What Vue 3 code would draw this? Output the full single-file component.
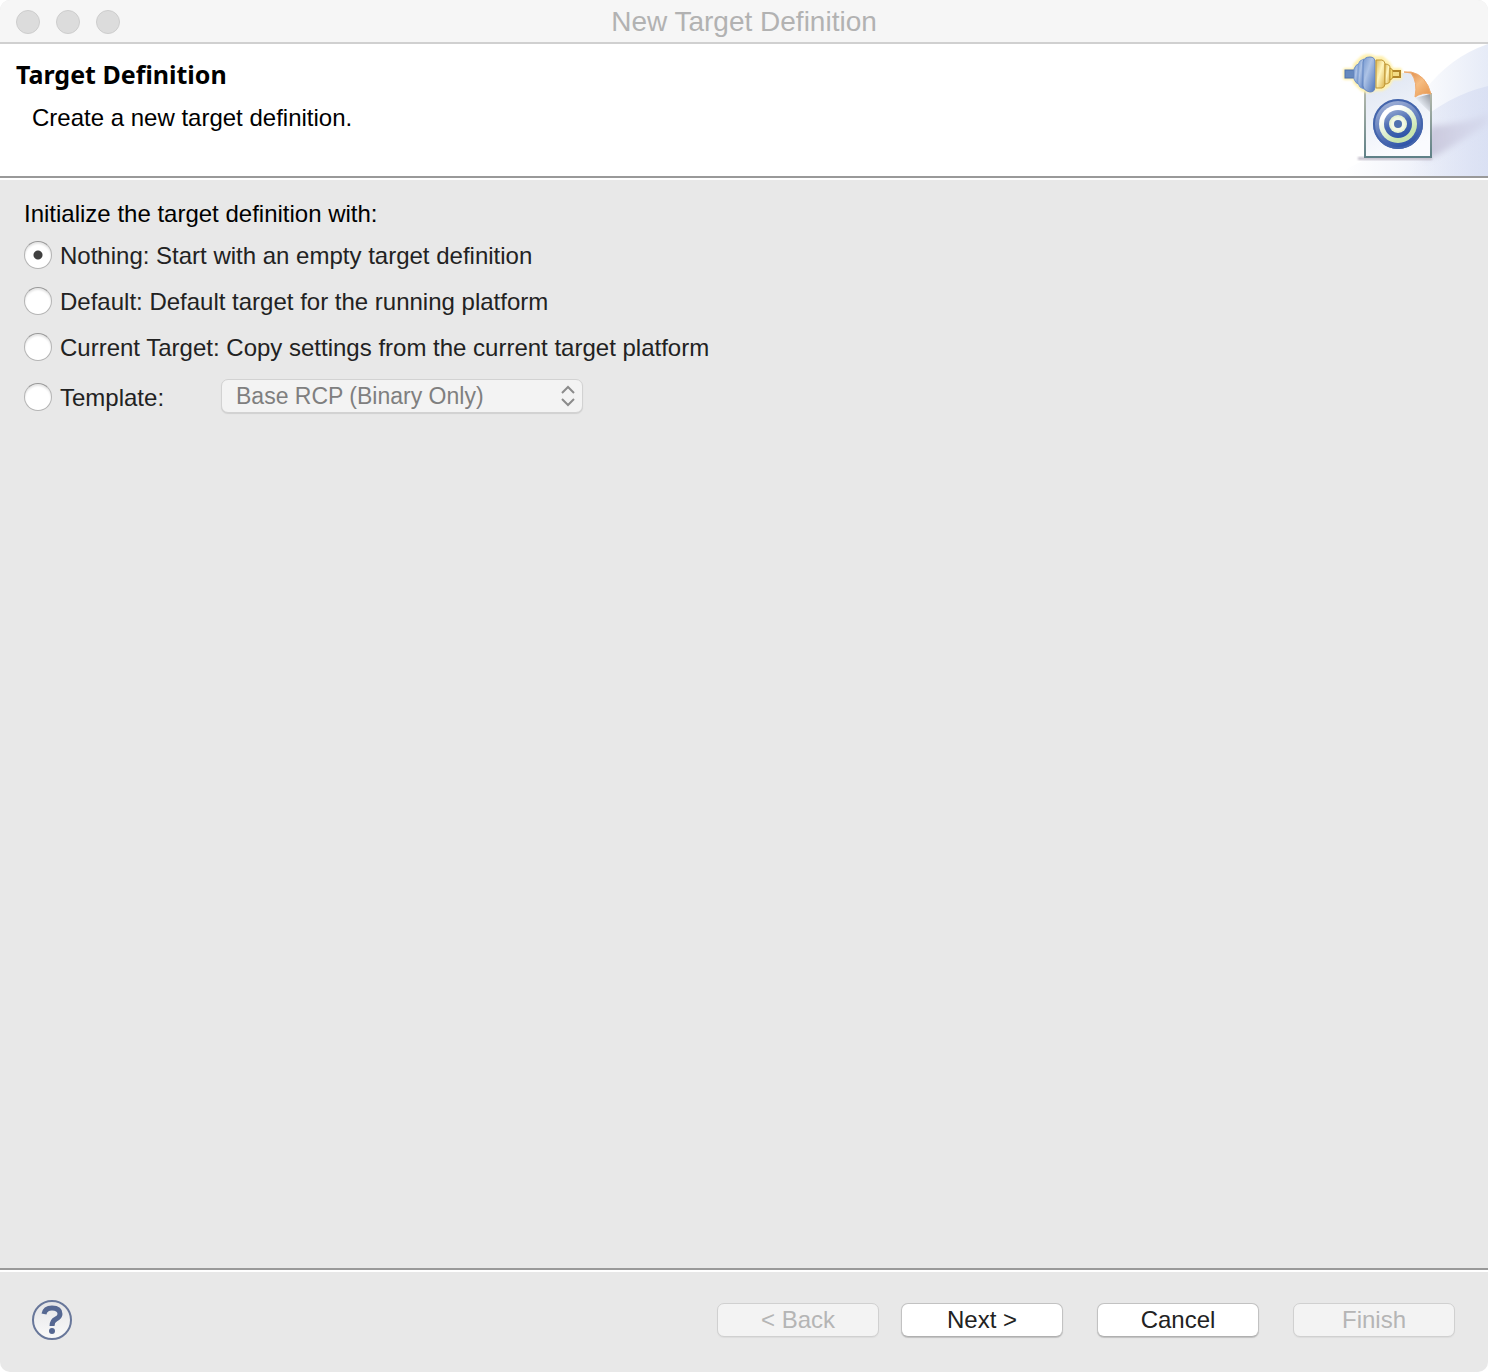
<script setup>
import { ref } from 'vue'

const choice = ref('nothing')
const template = ref('Base RCP (Binary Only)')
const options = [
  { id: 'nothing', label: 'Nothing: Start with an empty target definition' },
  { id: 'default', label: 'Default: Default target for the running platform' },
  { id: 'current', label: 'Current Target: Copy settings from the current target platform' },
]
</script>

<template>
  <div class="window">
    <div class="titlebar">
      <div class="lights"><span></span><span></span><span></span></div>
      <div class="caption">New Target Definition</div>
    </div>

    <header class="banner">
      <div class="banner-text">
        <h1>Target Definition</h1>
        <p>Create a new target definition.</p>
      </div>
      <svg class="banner-art" viewBox="0 0 160 132" width="160" height="132" aria-hidden="true">
        <defs>
          <linearGradient id="sky" x1="0" x2="1" y1="0" y2="0">
            <stop offset="0.2" stop-color="#fff" />
            <stop offset="1" stop-color="#e6ebf7" />
          </linearGradient>
          <linearGradient id="sky2" x1="0" x2="1" y1="0" y2="0">
            <stop offset="0.1" stop-color="#d5dcf2" stop-opacity="0" />
            <stop offset="1" stop-color="#d5dcf2" stop-opacity="0.7" />
          </linearGradient>
          <linearGradient id="shade" x1="0" x2="1" y1="0" y2="0">
            <stop offset="0" stop-color="#bcb8d0" stop-opacity="0.8" />
            <stop offset="1" stop-color="#cbcbe1" stop-opacity="0.3" />
          </linearGradient>
          <linearGradient id="paper" x1="0" x2="0.3" y1="0" y2="1">
            <stop offset="0" stop-color="#dde4f1" />
            <stop offset="1" stop-color="#fafbfe" />
          </linearGradient>
          <linearGradient id="edge" x1="0" x2="0" y1="0" y2="1">
            <stop offset="0" stop-color="#b9bcae" />
            <stop offset="1" stop-color="#5f8087" />
          </linearGradient>
          <linearGradient id="fold" x1="0" x2="1" y1="0" y2="1">
            <stop offset="0" stop-color="#d9813f" />
            <stop offset="0.5" stop-color="#f6bd82" />
            <stop offset="1" stop-color="#e4924a" />
          </linearGradient>
          <linearGradient id="curl" x1="0" x2="1" y1="1" y2="0">
            <stop offset="0.4" stop-color="#e6ebf3" />
            <stop offset="1" stop-color="#93979f" />
          </linearGradient>
          <linearGradient id="blue" x1="0" x2="1" y1="0" y2="1">
            <stop offset="0" stop-color="#7497cf" />
            <stop offset="0.4" stop-color="#adc3e6" />
            <stop offset="1" stop-color="#4f76ba" />
          </linearGradient>
          <linearGradient id="gold" x1="0" x2="1" y1="0" y2="1">
            <stop offset="0" stop-color="#e0bb55" />
            <stop offset="0.45" stop-color="#fff5bd" />
            <stop offset="1" stop-color="#d9ae45" />
          </linearGradient>
          <linearGradient id="rim" x1="0.2" x2="0.6" y1="0" y2="1">
            <stop offset="0" stop-color="#a9b8da" />
            <stop offset="0.45" stop-color="#6d87c2" />
            <stop offset="1" stop-color="#2b51a6" />
          </linearGradient>
          <linearGradient id="ring" x1="0.2" x2="0.6" y1="0" y2="1">
            <stop offset="0" stop-color="#93a8d2" />
            <stop offset="0.5" stop-color="#4a6bb2" />
            <stop offset="1" stop-color="#2f56a8" />
          </linearGradient>
          <linearGradient id="mint" x1="0.2" x2="0.8" y1="0" y2="1">
            <stop offset="0.2" stop-color="#fff" />
            <stop offset="0.8" stop-color="#c8e5ae" />
          </linearGradient>
          <filter id="soft" x="-20%" y="-20%" width="140%" height="140%">
            <feGaussianBlur stdDeviation="3" />
          </filter>
          <filter id="glow" x="-20%" y="-20%" width="140%" height="140%">
            <feGaussianBlur stdDeviation="1" />
          </filter>
        </defs>

        <path d="M60 132 Q84 26 160 0 V132 Z" fill="url(#sky)" />
        <path d="M0 132 H160 V42 Q118 52 85 83 Q45 116 0 132 Z" fill="url(#sky2)" />
        <path d="M103 82 Q137 80 160 70 V80 L113 109 Q104 115 94 114 Z" fill="url(#shade)" filter="url(#soft)" />
        <path d="M30 113 H104 V116 H30 Z" fill="#c3becb" filter="url(#glow)" />

        <path d="M37 29 H86 Q101 37 103 49 V113 H37 Z" fill="url(#paper)" />
        <path d="M37 45 V113 H103 V49" fill="none" stroke="url(#edge)" stroke-width="2" />
        <path d="M87 54 L102 50 V68 Z" fill="url(#curl)" />
        <path d="M76 28 H83 Q98 31 103 50 Q94 48 87 53 Q90 38 83 29 Z" fill="url(#fold)" stroke="#efaa6d" stroke-width="1" />

        <circle cx="70" cy="80" r="25" fill="url(#rim)" />
        <circle cx="70" cy="80" r="24" fill="none" stroke="#4465ac" stroke-width="2" />
        <circle cx="70" cy="80" r="19" fill="url(#mint)" />
        <circle cx="70" cy="80" r="14" fill="url(#ring)" />
        <circle cx="70" cy="80" r="9" fill="#e6f3d3" />
        <circle cx="70" cy="80" r="7" fill="#f2f8e6" />
        <circle cx="70" cy="80" r="4" fill="#4f71af" />

        <path
          d="M17 26 H27 V21 L34 14 Q40 10 47 14 H54 L60 19 L64 26 H72 V34 H64 L60 41 L54 45 H47 Q40 49 34 45 L27 38 V34 H17 Z"
          fill="#fff1b0" stroke="#fff1b0" stroke-width="4" stroke-linejoin="round" filter="url(#glow)"
        />
        <rect x="17" y="26" width="9" height="8" fill="#6689bf" stroke="#4d71ac" />
        <path d="M26 25 Q27 21 32 19 V41 Q27 39 26 35 Z" fill="url(#blue)" stroke="#7091c8" />
        <path d="M30 21 Q31 16 36 15 V45 Q31 44 30 39 Z" fill="url(#blue)" stroke="#7d9dd0" />
        <path d="M35 18 Q36 13 42 13 Q47 13 47 18 V43 Q47 48 42 48 Q36 47 35 42 Z" fill="url(#blue)" stroke="#6385c1" />
        <path d="M48 16 H54 Q57 17 57 20 V40 Q57 43 54 44 H48 Z" fill="url(#gold)" stroke="#bf9534" />
        <path d="M57 20 Q62 20 62 24 V36 Q62 40 57 40 Z" fill="url(#gold)" stroke="#bf9534" />
        <path d="M62 24 Q65 25 65 28 V32 Q65 35 62 36 Z" fill="#f4d96e" stroke="#bf9534" />
        <path d="M65 27 H72 V33 H65" fill="#f3dc84" stroke="#b28628" stroke-width="2" />
      </svg>
    </header>

    <main class="content">
      <fieldset>
        <legend>Initialize the target definition with:</legend>
        <div v-for="o in options" :key="o.id" class="row">
          <label><input v-model="choice" type="radio" name="init" :value="o.id" />{{ o.label }}</label>
        </div>
        <div class="row template-row">
          <label class="template-label"><input v-model="choice" type="radio" name="init" value="template" />Template:</label>
          <span class="picker">
            <select v-model="template" :disabled="choice !== 'template'" aria-label="Template">
              <option>Base RCP (Binary Only)</option>
            </select>
            <svg viewBox="0 0 14 22" width="14" height="22" aria-hidden="true">
              <path d="M1 8 L7 2 L13 8 M1 14 L7 20 L13 14" fill="none" stroke="#8b8b8b" stroke-width="2" />
            </svg>
          </span>
        </div>
      </fieldset>
    </main>

    <footer class="actions">
      <button class="help" type="button" aria-label="Help">
        <svg viewBox="0 0 42 42" width="42" height="42" aria-hidden="true">
          <defs>
            <linearGradient id="glass" x1="0" x2="0" y1="0" y2="1">
              <stop offset="0" stop-color="#e4e4e6" />
              <stop offset="1" stop-color="#fafafa" />
            </linearGradient>
          </defs>
          <circle cx="21" cy="21" r="19" fill="url(#glass)" stroke="#68779a" stroke-width="2" />
          <path d="M13 15 Q14 9 21 9 Q29 9 29 15 Q29 18 25 20 Q21 22 21 27" fill="none" stroke="#566892" stroke-width="5" />
          <circle cx="21" cy="32" r="3" fill="#566892" />
        </svg>
      </button>
      <div class="pair">
        <button class="push" type="button" disabled>&lt; Back</button>
        <button class="push" type="button">Next &gt;</button>
      </div>
      <button class="push" type="button">Cancel</button>
      <button class="push" type="button" disabled>Finish</button>
    </footer>
  </div>
</template>

<style>
body {
  margin: 0;
  background: #fff;
}
</style>

<style scoped>
.window {
  display: flex;
  flex-direction: column;
  min-height: 100vh;
  box-sizing: border-box;
  overflow: hidden;
  border-radius: 10px;
  background: #e8e8e8;
  color: #222;
  font: 24px/28px "Liberation Sans", Arial, sans-serif;
}
.titlebar {
  box-sizing: border-box;
  display: grid;
  grid-template-columns: 1fr auto 1fr;
  align-items: center;
  height: 44px;
  padding: 2px 16px 0;
  border-bottom: 2px solid #d0d0d0;
  background: #f6f6f6;
}
.lights {
  display: flex;
  gap: 16px;
}
.lights span {
  box-sizing: border-box;
  width: 24px;
  height: 24px;
  border: 1px solid #cdcdcd;
  border-radius: 50%;
  background: #dcdcdc;
}
.caption {
  color: #b2b2b2;
  font-size: 28px;
}
.banner {
  display: flex;
  justify-content: space-between;
  border-bottom: 2px solid #999;
  background: #fff;
  color: #000;
}
.banner-text {
  padding: 14px 16px;
}
h1 {
  margin: 0;
  font: bold 25px/32px "Noto Sans", "Open Sans", sans-serif;
}
p {
  margin: 14px 0 0 16px;
}
.banner-art {
  display: block;
  flex: none;
}
.content {
  flex: 1;
  padding: 20px 24px;
  border-top: 2px solid #fff;
  border-bottom: 2px solid #999;
}
fieldset {
  margin: 0;
  padding: 0;
  border: 0;
}
legend {
  padding: 0;
  margin-bottom: 13px;
  color: #000;
}
.row {
  display: flex;
  align-items: flex-end;
  margin-bottom: 16px;
}
label {
  display: flex;
  align-items: center;
  gap: 8px;
}
.template-row {
  align-items: flex-start;
  margin-bottom: 0;
}
.template-label {
  width: 197px;
  padding-top: 4px;
}
input[type="radio"] {
  appearance: none;
  box-sizing: border-box;
  flex: none;
  width: 28px;
  height: 28px;
  margin: 0 0 2px;
  border: 1px solid #b4b4b4;
  border-top-color: #989898;
  border-radius: 50%;
  background: #fff;
  box-shadow: inset 0 2px 2px #e6e6e6;
}
input[type="radio"]:checked {
  background: radial-gradient(circle, #404040 0 4px, #fff 5px);
}
.picker {
  display: grid;
  align-items: center;
  width: 362px;
}
.picker > * {
  grid-area: 1 / 1;
}
.picker svg {
  justify-self: end;
  margin-right: 8px;
  pointer-events: none;
}
select {
  appearance: none;
  box-sizing: border-box;
  width: 100%;
  height: 34px;
  padding: 0 32px 0 14px;
  border: 1px solid #d2d2d2;
  border-radius: 7px;
  background: #f3f3f3;
  box-shadow: 0 1px 1px #d0d0d0;
  color: #222;
  font: inherit;
  font-size: 23px;
}
select:disabled {
  color: #7f7f7f;
  opacity: 1;
}
.actions {
  box-sizing: border-box;
  display: flex;
  align-items: center;
  gap: 34px;
  height: 102px;
  padding: 0 33px 4px 31px;
  border-top: 2px solid #fff;
}
.help {
  margin: 0 auto 0 0;
  padding: 0;
  border: 0;
  background: none;
}
.help svg {
  display: block;
}
.pair {
  display: flex;
  gap: 22px;
}
.push {
  box-sizing: border-box;
  width: 162px;
  height: 34px;
  padding: 0;
  border: 1px solid #c2c2c2;
  border-bottom-color: #b0b0b0;
  border-radius: 7px;
  background: #fff;
  box-shadow: 0 1px 1px #c0c0c0;
  color: #222;
  font: inherit;
}
.push:disabled {
  border-color: #d0d0d0;
  background: #f3f3f3;
  box-shadow: 0 1px 1px #dcdcdc;
  color: #b5b5b5;
}
</style>
